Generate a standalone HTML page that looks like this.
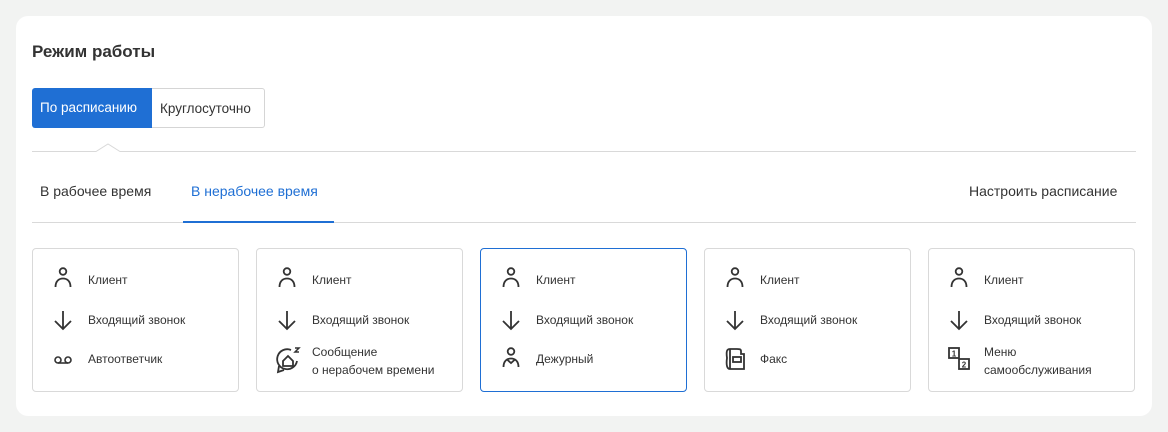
<!DOCTYPE html><html><head><meta charset="utf-8"><style>
body{margin:0;width:1168px;height:432px;background:#f2f3f2;font-family:"Liberation Sans",Arial,sans-serif;color:#333;position:relative;overflow:hidden}
.card{position:absolute;left:16px;top:16px;width:1136px;height:400px;background:#fff;border-radius:12px}
.abs{position:absolute}
h1{position:absolute;left:16px;margin:0;font-size:17px;font-weight:bold;color:#333;top:26px}
.btn{position:absolute;top:72px;height:40px;line-height:40px;font-size:13.5px;box-sizing:border-box;padding:0 8px;white-space:nowrap}
.tab{position:absolute;top:167px;font-size:14px;white-space:nowrap}
.c{position:absolute;top:232px;width:207px;height:144px;border:1px solid #d9d9d9;border-radius:4px;box-sizing:border-box}
.c.sel{border-color:#1f6fd4}
.r{position:absolute;left:56px;font-size:12px;color:#333;line-height:18px;white-space:nowrap}
.ic{position:absolute;left:20px;width:22px;height:22px;overflow:visible}
</style></head><body><div class="card">
<h1>Режим работы</h1>
<div class="btn" style="left:16px;width:120px;background:#1f6fd4;color:#fff;border-radius:3px 0 0 3px">По расписанию</div>
<div class="btn" style="left:136px;width:113px;border:1px solid #d5d5d5;border-left:none;border-radius:0 3px 3px 0;color:#333">Круглосуточно</div>
<svg class="abs" style="left:16px;top:127px" width="1104" height="10"><path d="M0 8.5H64L76 1L88 8.5H1104" fill="none" stroke="#d9d9d9"/></svg>
<div class="tab" style="left:24px">В рабочее время</div>
<div class="tab" style="left:175px;color:#1f6fd4">В нерабочее время</div>
<div class="tab" style="left:953px">Настроить расписание</div>
<div class="abs" style="left:16px;top:206px;width:1104px;height:1px;background:#d9d9d9"></div>
<div class="abs" style="left:167px;top:205px;width:151px;height:2px;background:#1f6fd4"></div>
</div>
<svg width="0" height="0" style="position:absolute"><defs>
<g id="person" fill="none" stroke="#333" stroke-width="1.8"><circle cx="11" cy="4.5" r="3.3"/><path d="M3.5 20C3.5 14 7 11.5 11 11.5S18.5 14 18.5 20"/></g>
<g id="arrow" fill="none" stroke="#333" stroke-width="1.8"><path d="M11 2V20M3 12L11 20L19 12"/></g>
</defs></svg>
<div style="position:absolute;left:16px;top:16px">
<div class="c" style="left:16px"></div>
<div class="c" style="left:240px"></div>
<div class="c sel" style="left:464px"></div>
<div class="c" style="left:688px"></div>
<div class="c" style="left:912px"></div>
</div>
<div style="position:absolute;left:32px;top:0">
<svg class="ic" style="top:267px"><use href="#person"/></svg><div class="r" style="top:271px">Клиент</div>
<svg class="ic" style="top:309px"><use href="#arrow"/></svg><div class="r" style="top:311px">Входящий звонок</div>
<svg class="ic" style="top:349px"><g fill="none" stroke="#333" stroke-width="1.6"><circle cx="6" cy="11" r="3"/><circle cx="16" cy="11" r="3"/><path d="M6 14H16"/></g></svg><div class="r" style="top:350px">Автоответчик</div>
</div>
<div style="position:absolute;left:256px;top:0">
<svg class="ic" style="top:267px"><use href="#person"/></svg><div class="r" style="top:271px">Клиент</div>
<svg class="ic" style="top:309px"><use href="#arrow"/></svg><div class="r" style="top:311px">Входящий звонок</div>
<svg class="ic" style="top:347px;width:26px;height:28px"><g fill="none" stroke="#333" stroke-width="1.8"><path d="M15 3A10 10 0 1 0 21 14M3 19L2 25L8 23"/><path d="M7 14L12 9L17 14V19H7Z"/><path d="M19 1H23L19 5H23" stroke-width="1.5"/></g></svg><div class="r" style="top:343px">Сообщение<br>о нерабочем времени</div>
</div>
<div style="position:absolute;left:480px;top:0">
<svg class="ic" style="top:267px"><use href="#person"/></svg><div class="r" style="top:271px">Клиент</div>
<svg class="ic" style="top:309px"><use href="#arrow"/></svg><div class="r" style="top:311px">Входящий звонок</div>
<svg class="ic" style="top:347px"><g fill="none" stroke="#333" stroke-width="1.8"><circle cx="11" cy="4.5" r="3.3"/><path d="M3.5 20C3.5 14 7 11.5 11 11.5S18.5 14 18.5 20M7 12.5L11 16L15 12.5"/></g></svg><div class="r" style="top:350px">Дежурный</div>
</div>
<div style="position:absolute;left:704px;top:0">
<svg class="ic" style="top:267px"><use href="#person"/></svg><div class="r" style="top:271px">Клиент</div>
<svg class="ic" style="top:309px"><use href="#arrow"/></svg><div class="r" style="top:311px">Входящий звонок</div>
<svg class="ic" style="top:346px;height:26px"><g fill="none" stroke="#333" stroke-width="1.8"><path d="M6 3C3 3 2 5 3 12C2 19 3 23 6 23H20V8H17V5C17 3 15 3 13 3Z"/><path d="M6 3V23"/><rect x="9" y="11" width="8" height="5"/></g></svg><div class="r" style="top:350px">Факс</div>
</div>
<div style="position:absolute;left:928px;top:0">
<svg class="ic" style="top:267px"><use href="#person"/></svg><div class="r" style="top:271px">Клиент</div>
<svg class="ic" style="top:309px"><use href="#arrow"/></svg><div class="r" style="top:311px">Входящий звонок</div>
<svg class="ic" style="top:346px;height:26px"><g fill="none" stroke="#333" stroke-width="1.8"><rect x="1" y="2" width="10" height="10"/><rect x="11" y="13" width="10" height="10"/></g><text x="6" y="10.5" font-size="8" font-weight="bold" text-anchor="middle" fill="#333" font-family="Liberation Sans">1</text><text x="16" y="21.5" font-size="8" font-weight="bold" text-anchor="middle" fill="#333" font-family="Liberation Sans">2</text></svg><div class="r" style="top:343px">Меню<br>самообслуживания</div>
</div>
</body></html>
